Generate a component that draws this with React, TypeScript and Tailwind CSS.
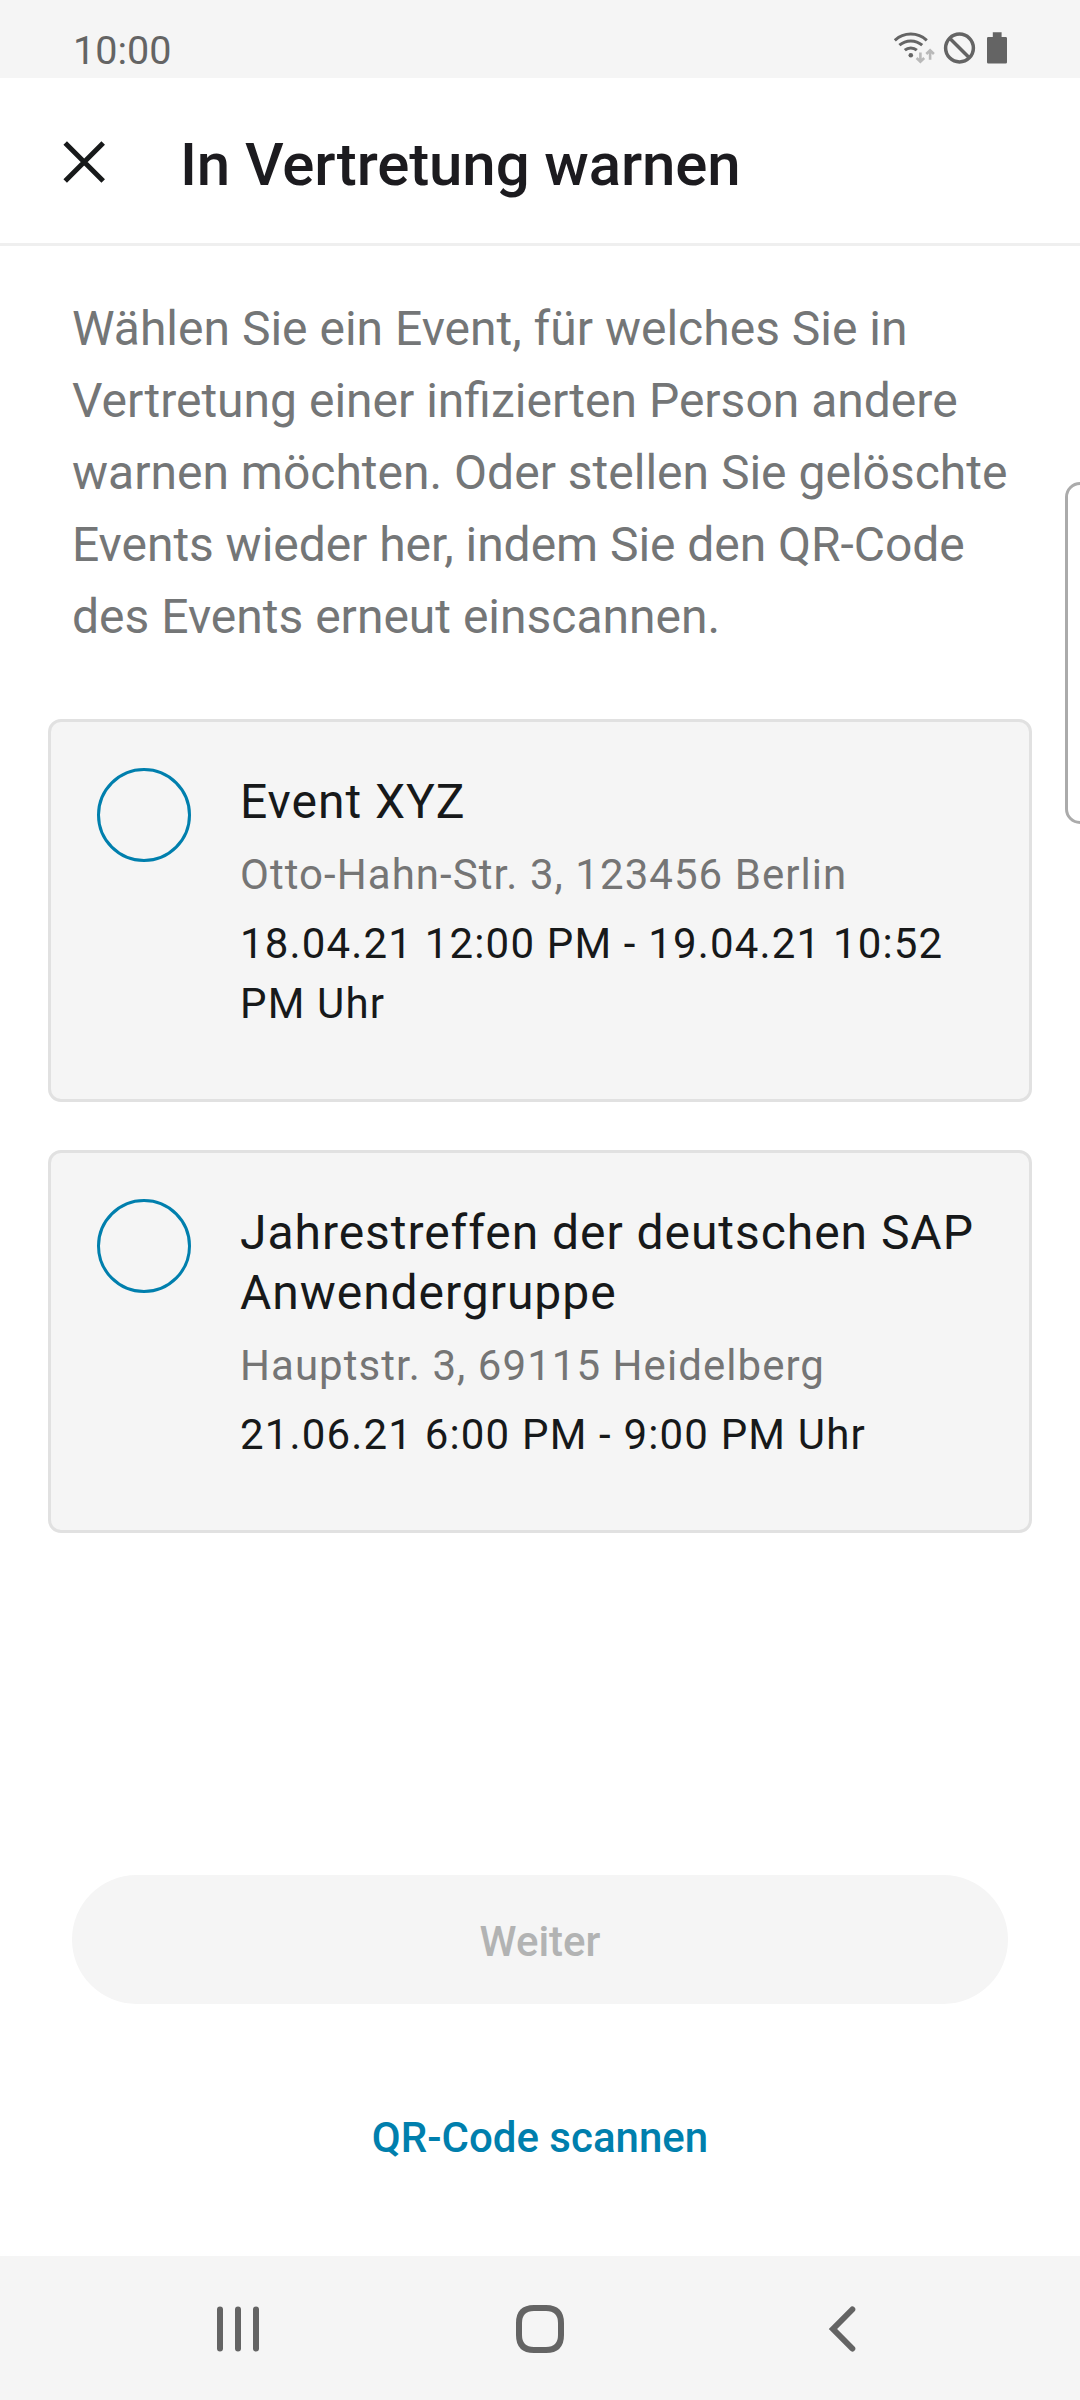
import React from "react";

const events = [
  { title: "Event XYZ", place: "Otto-Hahn-Str. 3, 123456 Berlin", time: "18.04.21 12:00 PM - 19.04.21 10:52 PM Uhr" },
  { title: "Jahrestreffen der deutschen SAP Anwendergruppe", place: "Hauptstr. 3, 69115 Heidelberg", time: "21.06.21 6:00 PM - 9:00 PM Uhr" },
];

function StatusIcons() {
  return (
    <svg width="116" height="36" viewBox="892 30 116 36" fill="none" stroke="#646464">
      <g strokeWidth="3">
        <path d="M894.8 40.3A23.8 23.8 0 0 1 926.8 40.3" />
        <path d="M899.4 45.2A17.2 17.2 0 0 1 922.2 45.2" />
        <path d="M904.8 50.2A9 9 0 0 1 916.8 50.2" />
      </g>
      <circle cx="910.8" cy="55.3" r="2.3" fill="#646464" stroke="none" />
      <g stroke="#b9b9b9" strokeWidth="2.6">
        <path d="M920.4 52.6V61M916.6 58L920.4 61.6L924.2 58" />
        <path d="M930.1 59.8V51M926.3 54L930.1 50.4L933.9 54" />
      </g>
      <circle cx="959.5" cy="48" r="13.9" strokeWidth="3.5" />
      <path d="M949.7 38.2L969.3 57.8" strokeWidth="3.5" />
      <path d="M992.8 32.3H1001.6V37H1005.7Q1007 37 1007 38.3V62.3Q1007 63.5 1005.7 63.5H988.3Q987 63.5 987 62.3V38.3Q987 37 988.3 37H992.8Z" fill="#646464" stroke="none" />
    </svg>
  );
}

function EventCard({ title, place, time }: { title: string; place: string; time: string }) {
  return (
    <div className="flex h-[383px] rounded-[13px] border-[3px] border-[#e1e1e1] bg-[#f5f5f5] pl-[46px] pt-[46px]">
      <div className="size-[94px] shrink-0 rounded-full border-[3px] border-[#007fad]" />
      <div className="ml-[49px] mt-[4px] w-[750px] leading-[60px]">
        <div className="text-[48px] leading-[60px] tracking-[0.95px]">{title}</div>
        <div className="mt-[13px] text-[42px] leading-[60px] tracking-[1.05px] text-[#757575]">{place}</div>
        <div className="mt-[9px] text-[42px] leading-[60px] tracking-[1.17px]">{time}</div>
      </div>
    </div>
  );
}

export default function App() {
  return (
    <div className="relative flex h-[2400px] w-[1080px] flex-col overflow-hidden bg-white font-['Roboto',sans-serif] text-[#17191a]">
      <div className="flex h-[78px] shrink-0 items-start justify-between bg-[#f5f5f5] pl-[73px] pr-[72px] text-[#646464]">
        <span className="mt-[28px] text-[39.5px] leading-[46px]">10:00</span>
        <span className="mt-[30px]">
          <StatusIcons />
        </span>
      </div>

      <header className="flex h-[168px] shrink-0 items-center border-b-[3px] border-[#efefef] pl-[62px] pt-[3px]">
        <svg width="44" height="44" viewBox="0 0 44 44" stroke="#17191a" strokeWidth="5">
          <path d="M3.2 3L41.2 41M41.2 3L3.2 41" />
        </svg>
        <h1 className="ml-[74px] mt-[5px] text-[60px] font-medium leading-[72px] tracking-[-0.12px] text-[#1c1b1f]">In Vertretung warnen</h1>
      </header>

      <p className="mt-[47px] pl-[72px] text-[48px] leading-[72px] text-[#747677]">
        Wählen Sie ein Event, für welches Sie in
        <br />
        Vertretung einer infizierten Person andere
        <br />
        warnen möchten. Oder stellen Sie gelöschte
        <br />
        <span className="tracking-[-0.05px]">Events wieder her, indem Sie den QR-Code</span>
        <br />
        des Events erneut einscannen.
      </p>

      <div className="mx-[48px] mt-[66px] flex flex-col gap-[48px]">
        {events.map((e) => (
          <EventCard key={e.title} {...e} />
        ))}
      </div>

      <div className="mt-auto flex flex-col px-[72px] font-medium">
        <button className="h-[129px] rounded-full bg-[#f5f5f5] pt-[4px] text-[42px] text-[#b2b3b3]">Weiter</button>
        <button className="mb-[88px] mt-[104px] text-[42px] leading-[60px] text-[#007fad]">QR-Code scannen</button>
      </div>

      <nav className="flex h-[144px] shrink-0 items-center justify-between bg-[#f5f5f5] px-[213px] pt-[2px]">
        <svg width="50" height="50" viewBox="0 0 50 50" stroke="#646464" strokeWidth="6" strokeLinecap="round">
          <path d="M7 5.5V44.5M25 5.5V44.5M43 5.5V44.5" />
        </svg>
        <svg width="50" height="50" viewBox="0 0 50 50" fill="none" stroke="#646464" strokeWidth="6">
          <path d="M19 4H31Q46 4 46 19V31Q46 46 31 46H19Q4 46 4 31V19Q4 4 19 4Z" />
        </svg>
        <svg width="50" height="50" viewBox="0 0 50 50" fill="none" stroke="#646464" strokeWidth="6" strokeLinecap="round">
          <path d="M35.3 5.5L16 25L35.3 44.5" />
        </svg>
      </nav>

      {/* Edge panel handle at the right screen border */}
      <div className="absolute -right-[20px] top-[482px] h-[342px] w-[35px] rounded-[15px] border-[3px] border-[#ababab]" />
    </div>
  );
}
